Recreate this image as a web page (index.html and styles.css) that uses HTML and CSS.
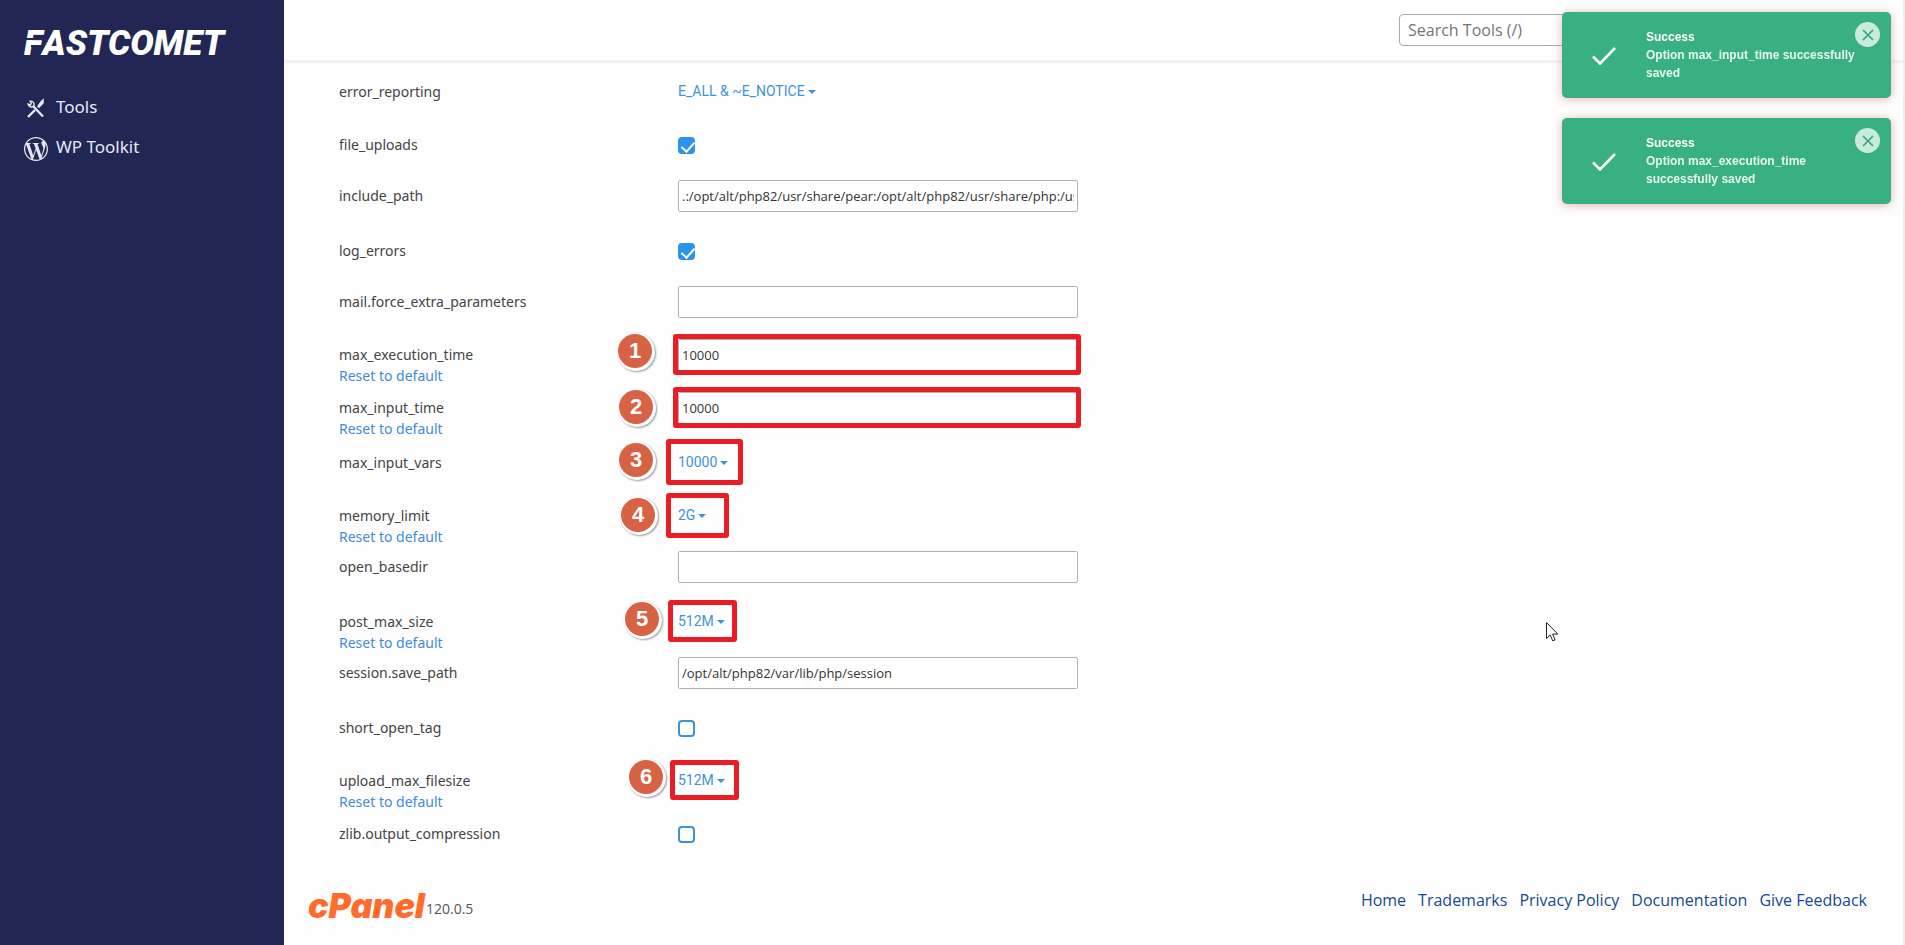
FILE: index.html
```html
<!DOCTYPE html>
<html lang="en">
<head>
<meta charset="utf-8">
<title>PHP Options</title>
<link rel="stylesheet" href="styles.css">
</head>
<body>
<svg class="defs" aria-hidden="true">
  <symbol id="caret" viewBox="0 0 8 4"><path d="M0 0h8L4 4z" fill="currentColor"/></symbol>
  <symbol id="tick" viewBox="0 0 24 18"><path d="M1 9.5l7 7L23 1" fill="none" stroke="currentColor" stroke-width="2.6"/></symbol>
  <symbol id="cross" viewBox="0 0 12 12"><path d="M1 1l10 10M11 1L1 11" fill="none" stroke="currentColor" stroke-width="1.7"/></symbol>
</svg>
<aside class="sidebar">
  <a class="brand" href="#"><span class="brand-initial">F</span>ASTCOMET</a>
  <nav class="menu">
    <a class="menu-item" href="#">
      <svg class="menu-icon" viewBox="0 0 24 24" fill="none" stroke="currentColor">
        <path d="M9 9l10 10.500" stroke-width="2.400"/>
        <path d="M4 20l7-7" stroke-width="2.400"/>
        <path d="M14 9.500l3-4.500 2-2v3l-4 4z" stroke-width="1.500" fill="currentColor"/>
        <path d="M6.200 4.200a3.300 3.300 0 0 1 3.600 4.600 3.300 3.300 0 0 1-5.800-1.800l2.300 1 1-1.600z" stroke-width="1.400"/>
      </svg>
      <span>Tools</span>
    </a>
    <a class="menu-item" href="#">
      <svg class="menu-icon" viewBox="0 0 24 24" fill="currentColor">
        <path d="M21.469 6.825c.84 1.537 1.318 3.300 1.318 5.175 0 3.979-2.156 7.456-5.363 9.325l3.295-9.527c.615-1.540.820-2.771.820-3.864 0-.405-.026-.780-.070-1.110m-7.981.105c.647-.030 1.232-.105 1.232-.105.582-.075.514-.930-.067-.899 0 0-1.755.135-2.880.135-1.064 0-2.850-.150-2.850-.150-.585-.030-.661.855-.075.885 0 0 .540.061 1.125.090l1.680 4.605-2.370 7.080L5.354 6.900c.649-.030 1.234-.100 1.234-.100.585-.075.516-.930-.065-.896 0 0-1.746.138-2.874.138-.200 0-.438-.008-.690-.015C4.911 3.150 8.235 1.215 12 1.215c2.809 0 5.365 1.072 7.286 2.833-.046-.003-.091-.009-.141-.009-1.060 0-1.812.923-1.812 1.914 0 .890.513 1.643 1.060 2.531.411.720.890 1.643.890 2.977 0 .915-.354 1.994-.821 3.479l-1.075 3.585-3.900-11.610.001.014zM12 22.784c-1.059 0-2.081-.153-3.048-.437l3.237-9.406 3.315 9.087c.024.053.050.101.078.149-1.120.393-2.325.609-3.582.609M1.211 12c0-1.564.336-3.050.935-4.390L7.290 21.709C3.694 19.960 1.212 16.271 1.211 12M12 0C5.385 0 0 5.385 0 12s5.385 12 12 12 12-5.385 12-12S18.615 0 12 0"/>
      </svg>
      <span>WP Toolkit</span>
    </a>
  </nav>
</aside>
<div class="page">
  <header class="topbar">
    <input class="search" type="search" placeholder="Search Tools (/)" aria-label="Search Tools">
  </header>
  <form class="options">
    <div class="row">
      <div class="name"><label for="error_reporting">error_reporting</label></div>
      <div class="field"><span class="pick"><select id="error_reporting"><option>E_ALL &amp; ~E_NOTICE</option></select><svg class="caret"><use href="#caret"/></svg></span></div>
    </div>
    <div class="row">
      <div class="name"><label for="file_uploads">file_uploads</label></div>
      <div class="field"><input class="check" id="file_uploads" type="checkbox" checked></div>
    </div>
    <div class="row row-text">
      <div class="name"><label for="include_path">include_path</label></div>
      <div class="field"><input class="text" id="include_path" type="text" value=".:/opt/alt/php82/usr/share/pear:/opt/alt/php82/usr/share/php:/usr/share/pear:/usr/share/php"></div>
    </div>
    <div class="row">
      <div class="name"><label for="log_errors">log_errors</label></div>
      <div class="field"><input class="check" id="log_errors" type="checkbox" checked></div>
    </div>
    <div class="row row-text">
      <div class="name"><label for="mail_params">mail.force_extra_parameters</label></div>
      <div class="field"><input class="text" id="mail_params" type="text"></div>
    </div>
    <div class="row row-text">
      <div class="name"><label for="max_execution_time">max_execution_time</label><a href="#">Reset to default</a></div>
      <div class="field"><input class="text" id="max_execution_time" type="text" value="10000"><span class="frame frame-1"></span><span class="badge badge-1">1</span></div>
    </div>
    <div class="row row-text">
      <div class="name"><label for="max_input_time">max_input_time</label><a href="#">Reset to default</a></div>
      <div class="field"><input class="text" id="max_input_time" type="text" value="10000"><span class="frame frame-2"></span><span class="badge badge-2">2</span></div>
    </div>
    <div class="row">
      <div class="name"><label for="max_input_vars">max_input_vars</label></div>
      <div class="field"><span class="pick"><select id="max_input_vars"><option>10000</option></select><svg class="caret"><use href="#caret"/></svg></span><span class="frame frame-3"></span><span class="badge badge-3">3</span></div>
    </div>
    <div class="row">
      <div class="name"><label for="memory_limit">memory_limit</label><a href="#">Reset to default</a></div>
      <div class="field"><span class="pick"><select id="memory_limit"><option>2G</option></select><svg class="caret"><use href="#caret"/></svg></span><span class="frame frame-4"></span><span class="badge badge-4">4</span></div>
    </div>
    <div class="row row-text">
      <div class="name"><label for="open_basedir">open_basedir</label></div>
      <div class="field"><input class="text" id="open_basedir" type="text"></div>
    </div>
    <div class="row">
      <div class="name"><label for="post_max_size">post_max_size</label><a href="#">Reset to default</a></div>
      <div class="field"><span class="pick"><select id="post_max_size"><option>512M</option></select><svg class="caret"><use href="#caret"/></svg></span><span class="frame frame-5"></span><span class="badge badge-5">5</span></div>
    </div>
    <div class="row row-text">
      <div class="name"><label for="save_path">session.save_path</label></div>
      <div class="field"><input class="text" id="save_path" type="text" value="/opt/alt/php82/var/lib/php/session"></div>
    </div>
    <div class="row">
      <div class="name"><label for="short_open_tag">short_open_tag</label></div>
      <div class="field"><input class="check" id="short_open_tag" type="checkbox"></div>
    </div>
    <div class="row">
      <div class="name"><label for="upload_max">upload_max_filesize</label><a href="#">Reset to default</a></div>
      <div class="field"><span class="pick"><select id="upload_max"><option>512M</option></select><svg class="caret"><use href="#caret"/></svg></span><span class="frame frame-6"></span><span class="badge badge-6">6</span></div>
    </div>
    <div class="row">
      <div class="name"><label for="zlib">zlib.output_compression</label></div>
      <div class="field"><input class="check" id="zlib" type="checkbox"></div>
    </div>
  </form>
  <footer class="footer">
    <div class="product"><a class="cpanel" href="#">cPanel</a><span class="version">120.0.5</span></div>
    <nav class="links">
      <a href="#">Home</a>
      <a href="#">Trademarks</a>
      <a href="#">Privacy Policy</a>
      <a href="#">Documentation</a>
      <a href="#">Give Feedback</a>
    </nav>
  </footer>
</div>
<div class="toasts">
  <div class="toast" role="status">
    <svg class="toast-tick"><use href="#tick"/></svg>
    <div class="toast-text"><strong>Success</strong><p>Option max_input_time successfully saved</p></div>
    <button class="toast-close" type="button" aria-label="Close"><svg><use href="#cross"/></svg></button>
  </div>
  <div class="toast" role="status">
    <svg class="toast-tick"><use href="#tick"/></svg>
    <div class="toast-text"><strong>Success</strong><p>Option max_execution_time successfully saved</p></div>
    <button class="toast-close" type="button" aria-label="Close"><svg><use href="#cross"/></svg></button>
  </div>
</div>
<svg class="pointer" viewBox="0 0 13 20"><path d="M.5.500v16l3.700-3.500 2.500 5.800 2.400-1-2.500-5.700h5.200z" fill="#fff" stroke="#222"/></svg>
</body>
</html>
```
FILE: styles.css
```css
* { box-sizing: border-box; }

body {
  margin: 0;
  min-height: 100vh;
  display: flex;
  background: #fefefe;
  color: #444;
  font: 14px/21px "Noto Sans", "Open Sans", sans-serif;
}

a { text-decoration: none; }
.defs { display: none; }

.sidebar {
  flex: 0 0 284px;
  padding: 24px;
  background: #212654;
}
.brand {
  display: block;
  color: #fff;
  font: italic 900 35px/40px Roboto, sans-serif;
}
.brand-initial {
  display: inline-block;
  position: relative;
}
.brand-initial::before,
.brand-initial::after {
  content: "";
  position: absolute;
  top: 14px;
  left: 0;
  width: 22px;
  height: 2px;
  background: #212654;
}
.brand-initial::after { top: 21px; left: 7px; width: 12px; }

.menu { margin-top: 24px; }
.menu-item {
  display: flex;
  align-items: center;
  gap: 8px;
  height: 40px;
  color: #e6e9f4;
  font-size: 17px;
  line-height: 22px;
}
.menu-item span { padding-bottom: 2px; }
.menu-icon { width: 24px; height: 24px; margin-top: 2px; }

.page {
  flex: 1;
  min-width: 0;
  display: flex;
  flex-direction: column;
  border-right: 2px solid #eee;
}
.topbar {
  display: flex;
  justify-content: flex-end;
  height: 63px;
  padding: 14px 24px;
  border-bottom: 3px solid #f2f2f2;
  background: #fff;
}
.search {
  width: 480px;
  height: 32px;
  padding: 0 8px;
  border: 1px solid #aaa;
  border-radius: 4px;
  background: #fff;
  color: #666;
  font: 16px "Open Sans", sans-serif;
}
.search::placeholder { color: #757575; opacity: 1; }

.options { padding: 7px 55px 0; }
.row {
  display: grid;
  grid-template-columns: 339px minmax(0, 400px);
  height: 53px;
}
.name {
  display: flex;
  flex-direction: column;
  align-items: flex-start;
  padding-top: 11px;
}
.row-text .name { padding-top: 9px; }
.name a { color: #428bd8; }
.field {
  position: relative;
  padding-top: 14px;
}
.row-text .field { padding-top: 4px; }

.text {
  display: block;
  width: 100%;
  height: 32px;
  padding: 0 3px;
  border: 1px solid #b2b2b2;
  border-radius: 2px;
  background: #fff;
  color: #333;
  font: 13px "Open Sans", sans-serif;
}
.check {
  display: block;
  appearance: none;
  width: 17px;
  height: 17px;
  margin: 0;
  border: 2px solid #3d93d9;
  border-radius: 4px;
  background: #fff;
}
.check:checked {
  border-color: #2a93ec;
  background: #2a93ec;
}
.check:checked::before {
  content: "";
  display: block;
  width: 6px;
  height: 11px;
  margin-left: 4px;
  border: solid #fff;
  border-width: 0 2px 2px 0;
  transform: rotate(42deg);
}
.pick {
  display: flex;
  align-items: center;
  gap: 3px;
  height: 14px;
  color: #3f92dc;
}
.pick select {
  appearance: none;
  field-sizing: content;
  padding: 0;
  border: 0;
  background: none;
  color: inherit;
  font: 14px/20px Roboto, sans-serif;
}
.caret { width: 8px; height: 4px; margin-top: 2px; }

/* Step markers laid over the fields */
.frame {
  position: absolute;
  border: 5px solid #ea1c24;
  border-radius: 3px;
  pointer-events: none;
}
.frame-1, .frame-2 { top: -1px; left: -5px; right: -3px; height: 41px; }
.frame-3 { top: -2px; left: -12px; width: 77px; height: 46px; }
.frame-4 { top: -1px; left: -12px; width: 63px; height: 45px; }
.frame-5 { top: 0; left: -10px; width: 69px; height: 42px; }
.frame-6 { top: 1px; left: -8px; width: 69px; height: 40px; }
.badge {
  position: absolute;
  width: 34px;
  height: 34px;
  border-radius: 50%;
  background: #d86344;
  box-shadow: 1px 1px 0 2px #fff, 2px 2px 2px 2px #999;
  color: #fff;
  font: bold 22px/34px "Liberation Sans", sans-serif;
  text-align: center;
}
.badge-1 { top: -1px; left: -60px; }
.badge-2 { top: 2px; left: -59px; }
.badge-3 { top: 2px; left: -59px; }
.badge-4 { top: 4px; left: -57px; }
.badge-5 { top: 2px; left: -53px; }
.badge-6 { top: 1px; left: -49px; }

.footer {
  display: flex;
  justify-content: space-between;
  padding: 20px 36px 20px 24px;
}
.product {
  display: flex;
  align-items: flex-end;
  gap: 1px;
  padding-top: 3px;
}
.cpanel {
  color: #ff6c2c;
  font: italic 900 34px/36px Inter, sans-serif;
}
.version { padding-bottom: 5px; color: #555; font: 14px/20px "Open Sans", sans-serif; }
.links { display: flex; gap: 12px; padding-top: 4px; }
.links a { color: #144a94; font: 16px/22px "Open Sans", sans-serif; }

.toasts {
  position: fixed;
  top: 12px;
  right: 14px;
  display: grid;
  gap: 20px;
}
.toast {
  display: flex;
  align-items: flex-start;
  width: 329px;
  height: 86px;
  padding: 10px 11px 10px 10px;
  border-radius: 5px;
  background: #38b082;
  box-shadow: 0 1px 10px rgba(190, 110, 90, .5);
  color: #fff;
  font: bold 12px/18px "Liberation Sans", sans-serif;
}
.toast-tick { width: 24px; height: 18px; margin: 25px 30px 0 20px; }
.toast-text { flex: 1; padding-top: 6px; }
.toast-text p { margin: 0; color: #e6f7f0; }
.toast-close {
  display: grid;
  place-items: center;
  width: 25px;
  height: 25px;
  padding: 0;
  border: 0;
  border-radius: 50%;
  background: #c9ebdc;
  color: #38a87c;
}
.toast-close svg { width: 12px; height: 12px; }

.pointer {
  position: fixed;
  left: 1546px;
  top: 622px;
  width: 13px;
  height: 20px;
}
```
